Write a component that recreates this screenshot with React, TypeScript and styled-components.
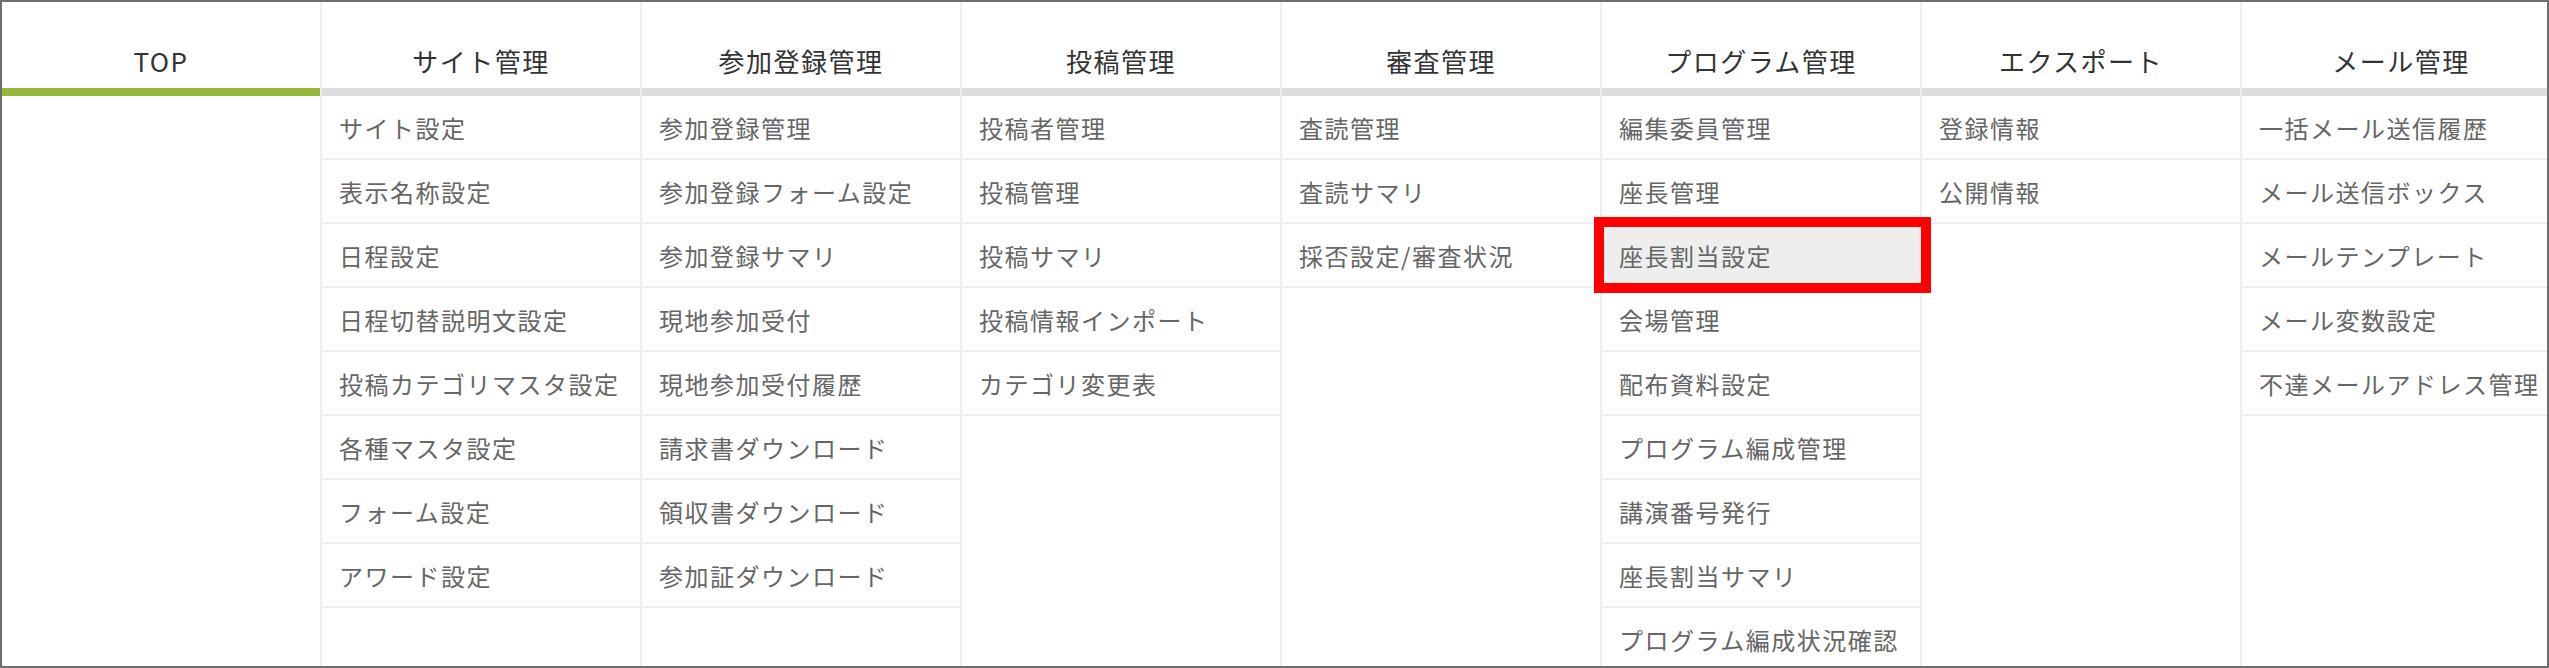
import React from 'react';
import styled, {createGlobalStyle} from "styled-components";

interface MenuGroup {
    title: string,
    active?: boolean,
    items: string[]
}

const groups: MenuGroup[] = [
    {title: 'TOP', active: true, items: []},
    {title: 'サイト管理', items: ['サイト設定', '表示名称設定', '日程設定', '日程切替説明文設定', '投稿カテゴリマスタ設定', '各種マスタ設定', 'フォーム設定', 'アワード設定']},
    {title: '参加登録管理', items: ['参加登録管理', '参加登録フォーム設定', '参加登録サマリ', '現地参加受付', '現地参加受付履歴', '請求書ダウンロード', '領収書ダウンロード', '参加証ダウンロード']},
    {title: '投稿管理', items: ['投稿者管理', '投稿管理', '投稿サマリ', '投稿情報インポート', 'カテゴリ変更表']},
    {title: '審査管理', items: ['査読管理', '査読サマリ', '採否設定/審査状況']},
    {title: 'プログラム管理', items: ['編集委員管理', '座長管理', '座長割当設定', '会場管理', '配布資料設定', 'プログラム編成管理', '講演番号発行', '座長割当サマリ', 'プログラム編成状況確認']},
    {title: 'エクスポート', items: ['登録情報', '公開情報']},
    {title: 'メール管理', items: ['一括メール送信履歴', 'メール送信ボックス', 'メールテンプレート', 'メール変数設定', '不達メールアドレス管理']},
]

// the item that is marked in the screenshot
const MARKED = '座長割当設定';

const GlobalStyle = createGlobalStyle`
  html, body {
    margin: 0;
    padding: 0;
    background: #fff;
  }
  body {
    font-family: "Noto Sans CJK JP", "Noto Sans", sans-serif;
  }
`

export default function App() {
    return (
        <>
            <GlobalStyle/>
            <StyledFrame>
                <StyledMenu>
                    {groups.map(group => (
                        <Column key={group.title}>
                            <Heading $active={group.active}>{group.title}</Heading>
                            {group.items.map(item => (
                                <Item key={item} $marked={item === MARKED}>
                                    {item}
                                    {item === MARKED && <Marker/>}
                                </Item>
                            ))}
                        </Column>
                    ))}
                </StyledMenu>
            </StyledFrame>
        </>
    )
}

const StyledFrame = styled.div`
  box-sizing: border-box;
  width: 2549px;
  height: 668px;
  border: 2px solid #6e6e6e;
  overflow: hidden;
`

const StyledMenu = styled.div`
  display: flex;
  width: 2560px;
  height: 100%;
`

const Column = styled.div`
  box-sizing: border-box;
  flex: 0 0 320px;
  border-right: 2px solid #eeeeee;
  display: flex;
  flex-direction: column;
`

const Heading = styled.div<{ $active?: boolean }>`
  box-sizing: border-box;
  flex: 0 0 94px;
  padding-bottom: 8px;
  display: flex;
  align-items: flex-end;
  justify-content: center;
  border-bottom: 8px solid ${p => p.$active ? '#95b83c' : '#dddddd'};
  color: #333;
  font-size: 26px;
  line-height: 38px;
  letter-spacing: 1.5px;
`

const Item = styled.div<{ $marked?: boolean }>`
  position: relative;
  box-sizing: border-box;
  flex: 0 0 64px;
  padding: 0 0 0 17px;
  display: flex;
  align-items: center;
  border-bottom: 2px solid #eeeeee;
  background: ${p => p.$marked ? '#eeeeee' : 'transparent'};
  color: #666;
  font-size: 24px;
  letter-spacing: 1.5px;
  white-space: nowrap;
`

const Marker = styled.span`
  position: absolute;
  z-index: 2;
  top: -7px;
  bottom: -7px;
  left: -8px;
  right: -11px;
  border: 10px solid #ff0000;
  pointer-events: none;
`
